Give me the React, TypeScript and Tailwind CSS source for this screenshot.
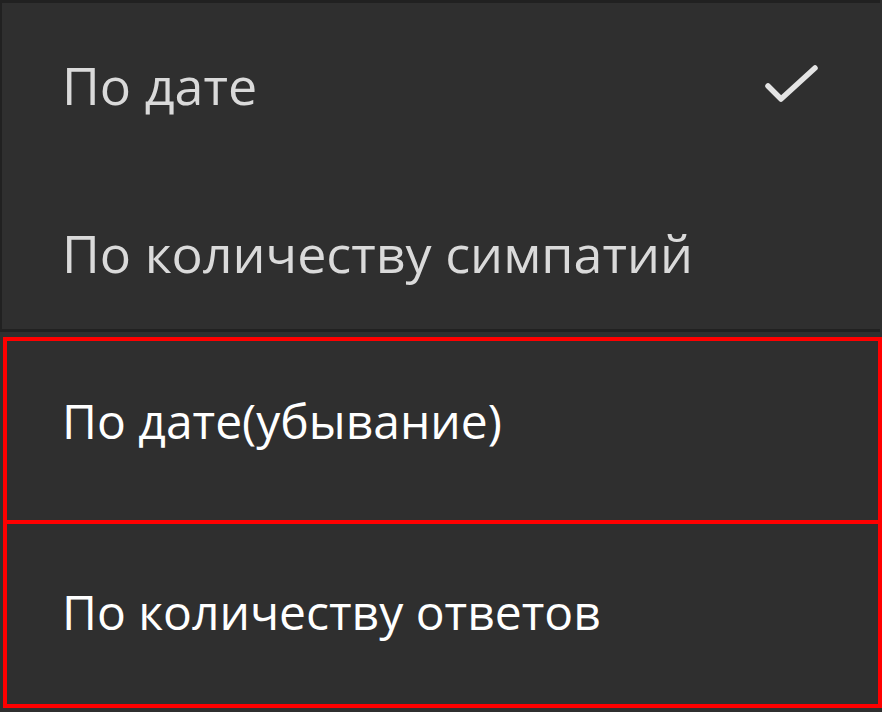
import { useState } from "react";

const topItems = ["По дате", "По количеству симпатий"];
const bottomItems = ["По дате(убывание)", "По количеству ответов"];

export default function App() {
  const [selected] = useState(0);

  return (
    <div
      className="w-[882px] h-[712px] bg-[#2f2f2f] overflow-hidden"
      style={{ fontFamily: '"Open Sans", "Noto Sans", sans-serif' }}
    >
      {/* sort menu */}
      <div className="border-t-[3px] border-l-[2px] border-b-[3px] border-[#212121] w-[880px]">
        <div className="h-[164px] flex items-center justify-between pl-[60px] pr-[60px]">
          <span className="text-[52px] leading-none text-[#dadada]">{topItems[0]}</span>
          {selected === 0 && (
            <svg width="56" height="44" viewBox="0 0 56 44" className="mt-[2px]">
              <path
                d="M4 22 L17 35 L51 4"
                fill="none"
                stroke="#e4e4e4"
                strokeWidth="5.5"
                strokeLinecap="round"
                strokeLinejoin="round"
              />
            </svg>
          )}
        </div>
        <div className="h-[162px] flex items-center pl-[60px] pt-[10px]">
          <span className="text-[52px] leading-none text-[#dadada]">{topItems[1]}</span>
        </div>
      </div>

      {/* new options */}
      <div className="mt-[5px] ml-[3px] border-4 border-[#ff0000]">
        <div className="h-[179px] flex items-center pl-[55px] pb-[20px]">
          <span className="text-[48px] leading-none text-white">{bottomItems[0]}</span>
        </div>
        <div className="h-[184px] border-t-4 border-[#ff0000] flex items-center pl-[55px] pb-[4px]">
          <span className="text-[48px] leading-none text-white">{bottomItems[1]}</span>
        </div>
      </div>
    </div>
  );
}
